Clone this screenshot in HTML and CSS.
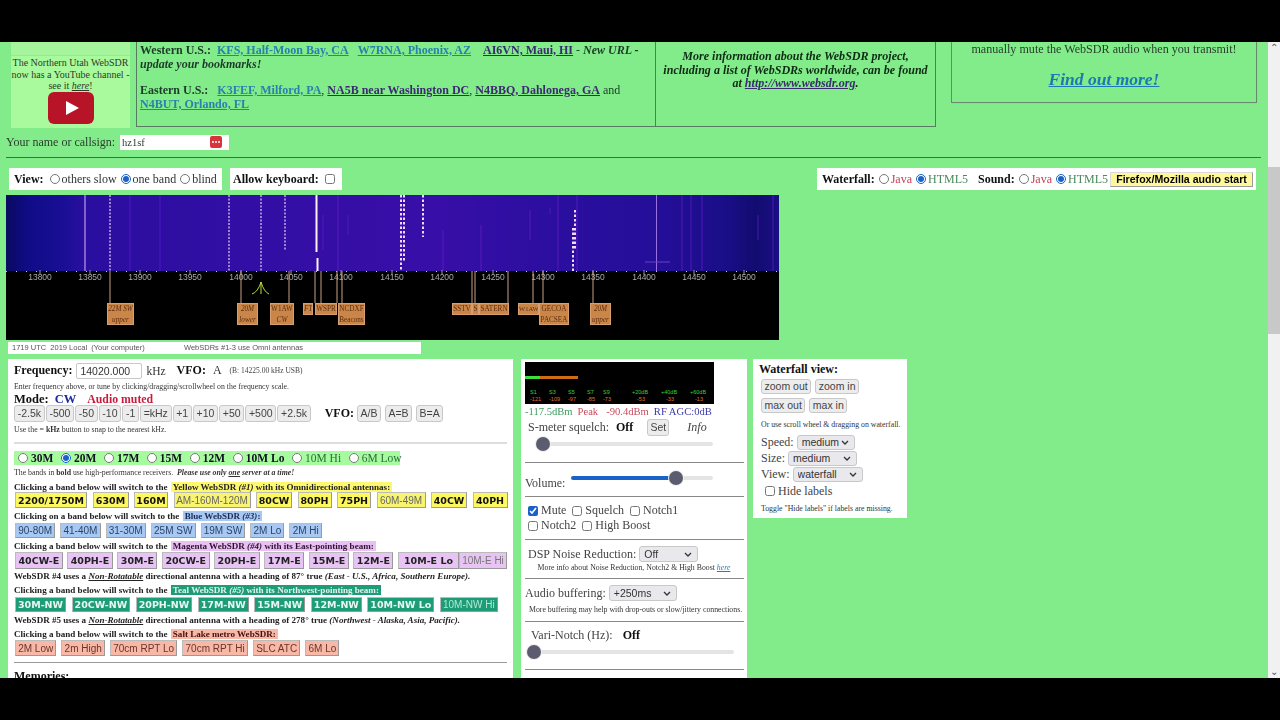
FILE: index.html
```html
<!DOCTYPE html>
<html lang="en">
<head>
<meta charset="utf-8">
<title>WebSDR</title>
<link rel="stylesheet" href="styles.css">
</head>
<body>
<div class="letterbox"></div>
<div class="viewport">
  <main class="page">
    <section class="top">
      <aside class="yt">
        <div class="yt-gap"></div>
        <p>The Northern Utah WebSDR now has a YouTube channel - see it <a href="#"><i>here</i></a>!</p>
        <svg class="yt-logo" width="46" height="32" viewBox="0 0 46 32"><rect width="46" height="32" rx="6" fill="#b81428"/><path d="M18 9 L31 16 L18 23 Z" fill="#fff"/></svg>
      </aside>
      <div class="links">
        <p><b>Western U.S.:</b>&nbsp; <a class="lnk" href="#">KFS, Half-Moon Bay, CA</a> &nbsp; <a class="lnk" href="#">W7RNA, Phoenix, AZ</a> &nbsp;&nbsp; <a class="vis" href="#">AI6VN, Maui, HI</a> - <b><i>New URL - update your bookmarks!</i></b></p>
        <p class="east"><b>Eastern U.S.:</b>&nbsp;&nbsp; <a class="lnk" href="#">K3FEF, Milford, PA</a>, <a class="vis" href="#">NA5B near Washington DC</a>, <a class="vis" href="#">N4BBQ, Dahlonega, GA</a> and <a class="lnk" href="#">N4BUT, Orlando, FL</a></p>
      </div>
      <div class="info"><b><i>More information about the WebSDR project, including a list of WebSDRs worldwide, can be found at <a class="vis" href="#">http://www.websdr.org</a>.</i></b></div>
      <div class="findout">
        <p>manually mute the WebSDR audio when you transmit!</p>
        <a class="find" href="#"><b><i>Find out more!</i></b></a>
      </div>
    </section>

    <div class="callsign"><span>Your name or callsign:</span><span class="callbox"><span>hz1sf</span><svg width="12" height="12" viewBox="0 0 12 12"><rect width="12" height="12" rx="2" fill="#d8343c"/><circle cx="3" cy="6" r="1" fill="#fff"/><circle cx="6" cy="6" r="1" fill="#fff"/><circle cx="9" cy="6" r="1" fill="#fff"/></svg></span></div>
    <hr class="rule">

    <div class="toolbar">
      <div class="chip view"><b>View:</b><label><input type="radio" name="v"> others slow</label><label><input type="radio" name="v" checked> one band</label><label><input type="radio" name="v"> blind</label></div>
      <div class="chip keyb"><b>Allow keyboard:</b><input type="checkbox"></div>
      <div class="chip engines"><b>Waterfall:</b><label><input type="radio" name="w"> <span class="red">Java</span></label><label><input type="radio" name="w" checked> <span class="grn">HTML5</span></label><b class="sound">Sound:</b><label><input type="radio" name="s"> <span class="red">Java</span></label><label><input type="radio" name="s" checked> <span class="grn">HTML5</span></label><button class="ffx">Firefox/Mozilla audio start</button></div>
    </div>

    <div class="waterfall">
      <svg width="773" height="145" viewBox="6 195 773 145">
        <defs>
          <linearGradient id="wf" x1="0" x2="1" y1="0" y2="0">
            <stop offset="0" stop-color="#0a0a60"/>
            <stop offset=".03" stop-color="#100c88"/>
            <stop offset=".07" stop-color="#180e94"/>
            <stop offset=".1" stop-color="#2a0ea0"/>
            <stop offset=".3" stop-color="#320ea4"/>
            <stop offset=".55" stop-color="#380ea8"/>
            <stop offset=".7" stop-color="#2c0ea0"/>
            <stop offset=".85" stop-color="#240e98"/>
            <stop offset=".93" stop-color="#1a0e88"/>
            <stop offset=".97" stop-color="#120c70"/>
            <stop offset="1" stop-color="#1a0e84"/>
          </linearGradient>
        </defs>
        <rect x="6" y="195" width="773" height="145" fill="#000"/>
        <rect x="6" y="195" width="773" height="76" fill="url(#wf)"/>
        <g class="sig-soft">
          <path d="M338 195V271M558 195V271M577 195V271M682 195V271M773 195V271M481 225V271M530 210V240M443 230V271"/>
        </g>
        <g class="sig-faint">
          <path d="M130 195V271M160 195V271M348 215V235M323 215V250M550 208V214M758 215V240M691 195V271M702 195V271"/>
        </g>
        <g class="sig-pale">
          <path d="M85 195V271"/>
        </g>
        <g class="sig-dot">
          <path d="M110 195V271M229 195V271M261 195V271M285 195V250"/>
        </g>
        <g class="sig-block">
          <path d="M401 195V271M404 195V262M423 195V237M573 228V271M575 210V250"/>
        </g>
        <path class="sig-hot" d="M316.500 195V252M317.500 258V271"/>
        <path class="sig-thin" d="M656.500 195V271"/>
        <path class="sig-cross" d="M645 262H670"/>
        <path class="ticks" d="M6 271.500H779"/>
        <g class="majors"><path d="M40 270V275M90 270V275M140 270V275M190 270V275M241 270V275M291 270V275M341 270V275M392 270V275M442 270V275M493 270V275M543 270V275M593 270V275M644 270V275M694 270V275M744 270V275"/></g>
        <g class="scale">
          <text x="40" y="280">13800</text><text x="90" y="280">13850</text><text x="140" y="280">13900</text><text x="190" y="280">13950</text><text x="241" y="280">14000</text><text x="291" y="280">14050</text><text x="341" y="280">14100</text><text x="392" y="280">14150</text><text x="442" y="280">14200</text><text x="493" y="280">14250</text><text x="543" y="280">14300</text><text x="593" y="280">14350</text><text x="644" y="280">14400</text><text x="694" y="280">14450</text><text x="744" y="280">14500</text>
        </g>
        <path class="stems" d="M110 271V303M241 271V303M289 271V303M315 271V303M321 271V303M337 271V303M342 271V303M472 271V303M475 271V303M508 271V303M533 271V303M543 271V303M593 271V303"/>
        <path class="passband" d="M252 294Q258 292 261 282Q264 292 269 294M261 282V294"/>
      </svg>
      <span class="tag two it pos-a">22M SW<br>upper</span>
      <span class="tag two it pos-b">20M<br>lower</span>
      <span class="tag two pos-c">W1AW<br><i>CW</i></span>
      <span class="tag it pos-d">FT</span>
      <span class="tag pos-e">WSPR</span>
      <span class="tag two pos-f">NCDXF<br>Beacons</span>
      <span class="tag pos-g">SSTV</span>
      <span class="tag pos-h">S</span>
      <span class="tag pos-i">SATERN</span>
      <span class="tag pos-j">W1AW</span>
      <span class="tag two pos-k">GECOA<br>PACSEA</span>
      <span class="tag two it pos-l">20M<br>upper</span>
    </div>

    <div class="status"><span class="status-time">1719 UTC&nbsp; 2019 Local&nbsp; (Your computer)</span><span>WebSDRs #1-3 use Omni antennas</span></div>

    <div class="panels">
      <section class="panel main">
        <div class="freq"><b>Frequency:</b><input class="freq-in" value="14020.000"><span>kHz</span><b class="vfo">VFO:</b><span class="vfo-a">A</span><small>(B: 14225.00 kHz USB)</small></div>
        <p class="tiny t1">Enter frequency above, or tune by clicking/dragging/scrollwheel on the frequency scale.</p>
        <div class="mode"><b>Mode:</b><b class="cw">CW</b><b class="muted">Audio muted</b></div>
        <div class="steps">
          <button>-2.5k</button><button>-500</button><button>-50</button><button>-10</button><button>-1</button><button>=kHz</button><button>+1</button><button>+10</button><button>+50</button><button>+500</button><button>+2.5k</button>
          <b class="vfo2">VFO:</b><button class="sp">A/B</button><button class="sp">A=B</button><button class="sp">B=A</button>
        </div>
        <p class="tiny t2">Use the = <b>kHz</b> button to snap to the nearest kHz.</p>
        <hr class="soft">
        <div class="bands">
          <label><input type="radio" name="b"> <b>30M</b></label><label><input type="radio" name="b" checked> <b>20M</b></label><label><input type="radio" name="b"> <b>17M</b></label><label><input type="radio" name="b"> <b>15M</b></label><label><input type="radio" name="b"> <b>12M</b></label><label><input type="radio" name="b"> <b>10M Lo</b></label><label><input type="radio" name="b"> 10M Hi</label><label><input type="radio" name="b"> 6M Low</label>
        </div>
        <p class="tiny t3">The bands in <b>bold</b> use high-performance receivers. &nbsp;<b><i>Please use only <u>one</u> server at a time!</i></b></p>

        <p class="head h-yellow">Clicking a band below will switch to the <mark class="m-yellow">Yellow WebSDR <i>(#1)</i> with its Omnidirectional antennas:</mark></p>
        <div class="btns b-yellow"><button class="bd w1">2200/1750M</button><button class="bd w2">630M</button><button class="bd w3">160M</button><button class="w4">AM-160M-120M</button><button class="bd w5">80CW</button><button class="bd w6">80PH</button><button class="bd w6">75PH</button><button class="w7">60M-49M</button><button class="bd w5">40CW</button><button class="bd w8">40PH</button></div>

        <p class="head">Clicking on a band below will switch to the <mark class="m-blue">Blue WebSDR <i>(#3)</i>:</mark></p>
        <div class="btns b-blue"><button>90-80M</button><button>41-40M</button><button>31-30M</button><button>25M SW</button><button>19M SW</button><button>2M Lo</button><button>2M Hi</button></div>

        <p class="head">Clicking a band below will switch to the <mark class="m-mag">Magenta WebSDR <i>(#4)</i> with its East-pointing beam:</mark></p>
        <div class="btns b-mag"><button class="bd">40CW-E</button><button class="bd">40PH-E</button><button class="bd">30M-E</button><button class="bd">20CW-E</button><button class="bd">20PH-E</button><button class="bd">17M-E</button><button class="bd">15M-E</button><button class="bd">12M-E</button><button class="bd wide">10M-E Lo</button><button>10M-E Hi</button></div>
        <p class="note n-mag"><b>WebSDR #4 uses a <u><i>Non-Rotatable</i></u> directional antenna with a heading of 87° true <i>(East - U.S., Africa, Southern Europe).</i></b></p>

        <p class="head">Clicking a band below will switch to the <mark class="m-teal">Teal WebSDR <i>(#5)</i> with its Northwest-pointing beam:</mark></p>
        <div class="btns b-teal"><button class="bd">30M-NW</button><button class="bd">20CW-NW</button><button class="bd">20PH-NW</button><button class="bd">17M-NW</button><button class="bd">15M-NW</button><button class="bd">12M-NW</button><button class="bd">10M-NW Lo</button><button>10M-NW Hi</button></div>
        <p class="note"><b>WebSDR #5 uses a <u><i>Non-Rotatable</i></u> directional antenna with a heading of 278° true <i>(Northwest - Alaska, Asia, Pacific).</i></b></p>

        <p class="head">Clicking a band below will switch to the <mark class="m-salmon">Salt Lake metro WebSDR:</mark></p>
        <div class="btns b-salmon"><button>2M Low</button><button>2m High</button><button>70cm RPT Lo</button><button>70cm RPT Hi</button><button>SLC ATC</button><button>6M Lo</button></div>
        <hr class="dark">
        <p class="memories"><b>Memories:</b></p>
      </section>

      <section class="panel mid">
        <svg class="smeter" width="189" height="42" viewBox="0 0 189 42">
          <rect width="189" height="42" fill="#000"/>
          <rect x="0" y="14" width="15" height="3" fill="#3ce03c"/>
          <rect x="15" y="14" width="38" height="3" fill="#d06c14"/>
          <g class="s-top"><text x="5" y="32">S1</text><text x="24" y="32">S3</text><text x="43" y="32">S5</text><text x="62" y="32">S7</text><text x="78" y="32">S9</text><text x="107" y="32">+20dB</text><text x="136" y="32">+40dB</text><text x="165" y="32">+60dB</text></g>
          <g class="s-low"><text x="5" y="39">-121</text><text x="24" y="39">-109</text><text x="43" y="39">-97</text><text x="62" y="39">-85</text><text x="78" y="39">-73</text><text x="112" y="39">-53</text><text x="141" y="39">-33</text><text x="170" y="39">-13</text></g>
        </svg>
        <div class="levels"><span class="lv-g">-117.5dBm</span><span class="lv-r">Peak</span><span class="lv-r lv-peak">-90.4dBm</span><span class="lv-b">RF AGC:0dB</span></div>
        <div class="squelch"><span>S-meter squelch:</span><b>Off</b><button>Set</button><i>Info</i></div>
        <input class="range r-sq" type="range" min="0" max="100" value="0">
        <hr class="mid-hr hr1">
        <div class="volume"><span>Volume:</span><input class="range r-vol" type="range" min="0" max="100" value="76" style="--fill:76%"></div>
        <hr class="mid-hr">
        <div class="checks first"><label><input type="checkbox" checked> Mute</label><label><input type="checkbox"> Squelch</label><label><input type="checkbox"> Notch1</label></div>
        <div class="checks"><label><input type="checkbox"> Notch2</label><label><input type="checkbox"> High Boost</label></div>
        <hr class="mid-hr hr3">
        <div class="dsp"><span>DSP Noise Reduction:</span><select class="sel sel-off"><option>Off</option></select></div>
        <p class="tiny center">More info about Noise Reduction, Notch2 &amp; High Boost <a class="lnk" href="#"><i>here</i></a></p>
        <hr class="mid-hr hr4">
        <div class="buffer"><span>Audio buffering:</span><select class="sel sel-buf"><option>+250ms</option></select></div>
        <p class="tiny buf-note">More buffering may help with drop-outs or slow/jittery connections.</p>
        <hr class="mid-hr hr5">
        <div class="vari"><span>Vari-Notch (Hz):</span><b>Off</b></div>
        <input class="range r-var" type="range" min="0" max="100" value="0">
        <hr class="mid-hr hr6">
      </section>

      <section class="panel side">
        <h3>Waterfall view:</h3>
        <div class="zoomrow"><button>zoom out</button><button>zoom in</button></div>
        <div class="zoomrow"><button>max out</button><button>max in</button></div>
        <p class="tiny side-n1">Or use scroll wheel &amp; dragging on waterfall.</p>
        <div class="opt"><span>Speed:</span><select class="sel s1"><option>medium</option></select></div>
        <div class="opt"><span>Size:</span><select class="sel s2"><option>medium</option></select></div>
        <div class="opt"><span>View:</span><select class="sel s3"><option>waterfall</option></select></div>
        <label class="hide"><input type="checkbox"> Hide labels</label>
        <p class="tiny side-n2">Toggle "Hide labels" if labels are missing.</p>
      </section>
    </div>
  </main>
  <div class="scrollbar"><span class="arrow">⌃</span><div class="thumb"></div><span class="arrow down">⌄</span></div>
</div>
<div class="letterbox"></div>
</body>
</html>
```
FILE: styles.css
```css
* { box-sizing: border-box; }
html, body { margin: 0; height: 720px; overflow: hidden; background: #000; }
body { font-family: "Liberation Serif", serif; color: #111; font-size: 13px; }
p, h3 { margin: 0; }
a { color: inherit; }
.letterbox { height: 42px; background: #000; }
.viewport { height: 636px; display: flex; overflow: hidden; background: #83ec8a; }
.page { flex: 1; min-width: 0; overflow: hidden; padding-left: 6px; filter: blur(.35px); }
.scrollbar { width: 12px; background: #f1f1f1; display: flex; flex-direction: column; align-items: center; font: 10px/12px "Liberation Sans", sans-serif; color: #555; }
.thumb { margin-top: 113px; width: 12px; height: 167px; background: #c8c8c8; flex: none; }
.arrow { height: 12px; flex: none; }
.arrow.down { margin-top: auto; }

/* top banner row */
.top { display: flex; height: 85px; align-items: flex-start; }
.yt { width: 119px; height: 86px; margin-left: 5px; background: #a8fa9c; text-align: center; font-size: 10px; line-height: 11.500px; color: #2c3a2c; flex: none; }
.yt-gap { height: 14px; margin-bottom: 1px; background: #a4f59c; border-bottom: 1px solid #94ec90; }
.yt-logo { display: block; margin: 0 auto; }
.links { width: 519px; height: 85px; margin-left: 6px; border-left: 1px solid #5a7a60; border-bottom: 1px solid #5a7a60; padding: 1px 3px 0; font-size: 12px; line-height: 14px; flex: none; color: #1d3a2a; font-weight: bold; }
.links p { font-weight: normal; }
.links a { font-weight: bold; }
.links .east { margin-top: 12px; }
.lnk { color: #2a80ac; }
.vis { color: #3a2a70; }
.info { width: 281px; height: 85px; border: 1px solid #5a7a60; border-top: 0; padding: 8px 4px 0; text-align: center; font-size: 12.050px; line-height: 13.500px; flex: none; color: #0d2a14; }
.findout { width: 306px; height: 61px; margin-left: 15px; border: 1px solid #6a8a70; border-top: 0; box-shadow: 1px 1px 0 #a0d0a0; text-align: center; font-size: 12.100px; flex: none; color: #27402c; }
.findout p { line-height: 14px; }
.find { display: block; margin-top: 12px; color: #1c78b4; font-size: 17.500px; line-height: 22px; }

.callsign { height: 30px; display: flex; align-items: center; gap: 4px; font-size: 12px; color: #2c3c30; white-space: nowrap; }
.callbox { width: 109px; height: 15px; background: #fff; display: flex; align-items: center; justify-content: space-between; padding: 0 7px 0 2px; font-size: 10.500px; margin-left: 1px; }
.rule { margin: 0; width: 1255px; height: 1px; border: 0; background: #4a6a50; }

.toolbar { display: flex; height: 37px; padding-top: 10px; font-size: 12px; }
.chip { background: #fff; height: 22px; display: flex; align-items: center; gap: 4px; white-space: nowrap; color: #333; flex: none; }
.chip b { color: #111; }
.view { margin-left: 3px; width: 213px; padding-left: 5px; }
.view b { margin-right: 2px; }
.keyb { margin-left: 8px; width: 112px; padding-left: 3px; gap: 6px; }
.engines { margin-left: auto; margin-right: 12px; width: 439px; padding-left: 5px; }
.chip label { display: inline-flex; align-items: center; gap: 2px; }
.chip input { margin: 0; width: 10px; height: 10px; accent-color: #1a62c8; }
.sound { margin-left: 6px; }
.red { color: #c83c50; }
.grn { color: #4a8a5a; }
.ffx { margin: 0 0 0 -2px; width: 143px; height: 15px; padding: 0; font: bold 10.600px/13px "Liberation Sans", sans-serif; background: #fff89a; border: 1px solid #dadada; border-right-color: #999; border-bottom-color: #999; border-radius: 0; color: #000; }

.waterfall { position: relative; width: 773px; height: 145px; }
.waterfall svg { display: block; }
.sig-soft path { fill: none; stroke: #7a20d8; stroke-width: 1; opacity: .55; }
.sig-faint path { fill: none; stroke: #5a18c8; stroke-width: 2; opacity: .4; }
.sig-pale path { fill: none; stroke: #c8a0f0; stroke-width: 1.500; opacity: .75; }
.sig-dot path { fill: none; stroke: #f0d0f4; stroke-width: 1.200; stroke-dasharray: 2 1.500; }
.sig-block path { fill: none; stroke: #f4d8f8; stroke-width: 2; stroke-dasharray: 2.500 2; }
.sig-hot { fill: none; stroke: #fff0f0; stroke-width: 2; }
.sig-thin { fill: none; stroke: #9a70e0; stroke-width: 1; }
.sig-cross { fill: none; stroke: #6a40c8; stroke-width: 1; }
.ticks { fill: none; stroke: #ccc; stroke-width: 1; stroke-dasharray: 1 9; }
.majors path { fill: none; stroke: #999; }
.scale text { font: 8.500px "Liberation Sans", sans-serif; fill: #aaa; text-anchor: middle; }
.stems { fill: none; stroke: #c8a284; stroke-width: 1; }
.passband { fill: none; stroke: #b4dc3c; stroke-width: 1; }
.tag { position: absolute; top: 108px; height: 12px; background: #ca8648; border: 1px solid #d8a070; color: #5a2c10; font-size: 7.200px; line-height: 10.500px; overflow: hidden; white-space: nowrap; text-align: center; }
.two { height: 22px; }
.it { font-style: italic; }
.pos-a { left: 101px; width: 27px; }
.pos-b { left: 231px; width: 21px; }
.pos-c { left: 264px; width: 24px; }
.pos-d { left: 297px; width: 10px; }
.pos-e { left: 309px; width: 22px; }
.pos-f { left: 332px; width: 27px; }
.pos-g { left: 446px; width: 20px; }
.pos-h { left: 466px; width: 7px; }
.pos-i { left: 473px; width: 30px; }
.pos-j { left: 512px; width: 21px; font-size: 6.500px; }
.pos-k { left: 533px; width: 30px; }
.pos-l { left: 584px; width: 21px; }

.status { margin: 2px 0 0 2px; width: 413px; height: 12px; background: #fff; font: 7.500px/12px "Liberation Sans", sans-serif; color: #555; padding-left: 4px; display: flex; }
.status-time { width: 172px; }

.panels { display: flex; align-items: flex-start; margin-top: 5px; }
.panel { background: #fff; flex: none; }
.main { margin-left: 2px; width: 505px; height: 340px; padding: 0 6px; overflow: hidden; }
.freq { height: 21px; margin-top: 1px; display: flex; align-items: center; font-size: 11.500px; color: #333; }
.freq b { font-size: 12px; color: #111; }
.freq-in { width: 66px; height: 16px; margin: 0 4px; padding: 0 3px; border: 1px solid #c8c8c8; border-radius: 2px; font: 10.500px "Liberation Sans", sans-serif; color: #333; }
.vfo { margin-left: 11px; }
.vfo-a { margin-left: 7px; font-size: 12px; }
.freq small { margin-left: 8px; font-size: 7.500px; color: #444; }
.tiny { font-size: 7.800px; line-height: 10px; color: #333; white-space: nowrap; }
.t1 { margin-top: 1px; }
.mode { height: 14px; display: flex; gap: 6px; font-size: 12.500px; line-height: 14px; }
.cw { color: #1c2a9c; }
.muted { color: #c81c3c; margin-left: 5px; font-size: 11.800px; }
.steps { height: 17px; margin-top: -1px; display: flex; gap: 1px; align-items: stretch; position: relative; }
button { margin: 0; padding: 0 3px; font: 10.500px/13px "Liberation Sans", sans-serif; color: #444; background: #ececec; border: 1px solid #c8c8c8; border-radius: 3px; white-space: nowrap; }
.steps button { flex: none; padding: 0 2.700px; }
.vfo2 { font-size: 12px; margin: 1px 2px 0 13px; line-height: 15px; }
.steps .sp { margin-right: 3px; padding: 0 2.500px; }
.t2 { margin-top: 3px; }
.soft { margin: 7px 0 0; height: 2px; border: 0; background: #ddd; }
.bands { margin-top: 7px; width: 386px; height: 14px; display: flex; background: #a6fb9e; font-size: 11.500px; line-height: 14px; gap: 7.600px; padding-left: 4px; white-space: nowrap; color: #2c6c3a; }
.bands b { color: #112; }
.bands label { display: inline-flex; align-items: center; gap: 3px; }
.bands input { margin: 0; width: 10px; height: 10px; accent-color: #1a62c8; }
.t3 { margin-top: 3px; }
.head { font-size: 9.050px; line-height: 11px; font-weight: bold; white-space: nowrap; color: #222; margin-top: 3px; }
.h-yellow { margin-top: 4px; }
mark { color: inherit; padding: 0 2px; margin-left: 1px; }
.m-yellow { background: #fdf870; }
.m-blue { background: #a8c8f4; color: #1a2a50; }
.m-mag { background: #e8c0f4; color: #301030; }
.m-teal { background: #1e9c78; color: #e0f4ec; }
.m-salmon { background: #f8b8a8; color: #401010; }
.btns { display: flex; gap: 5px; margin: 0 0 0 1px; height: 16px; }
.btns button { border: 1px solid #bbb; border-right-color: #999; border-bottom-color: #999; border-radius: 0; padding: 0 2.200px; font-size: 10px; flex: none; }
.btns .bd { font: bold 9.500px/13px "DejaVu Sans", sans-serif; color: #222; padding: 0 2.500px; }
.b-yellow { margin-top: -1px; gap: 5.500px; }
.b-yellow button { background: #fdf860; padding: 0; }
.b-yellow .bd { color: #111; padding: 0; }
.b-yellow button:not(.bd) { color: #666; background: #f8f470; }
.w1 { width: 72px; } .w2 { width: 36px; } .w3 { width: 34px; } .w4 { width: 77px; } .w5 { width: 36px; } .w6 { width: 34px; } .w7 { width: 49px; } .w8 { width: 35px; }
.b-blue { margin-top: 1px; height: 15px; }
.b-blue button { background: #a8c8f4; color: #2a4468; }
.b-mag { height: 17px; gap: 4.500px; }
.b-mag button { background: #e8c4f4; }
.b-mag .wide { padding: 0 5px; }
.b-mag button:last-child { color: #777; margin-left: -4.500px; }
.note { font-size: 9.050px; line-height: 11px; white-space: nowrap; color: #222; margin-top: 3px; }
.n-mag { margin-top: 2px; }
.note i { font-weight: bold; }
.b-teal { margin-top: 1px; height: 15px; gap: 5.500px; }
.b-teal button { background: #1e9c78; color: #e8f8f0; }
.b-teal .bd { color: #e8f8f0; padding: 0 2px; }
.b-teal button:last-child { color: #b0e8d0; }
.b-salmon { gap: 5px; }
.b-salmon button { background: #f8b8a8; color: #6a3428; }
.dark { margin: 6px 0 0; height: 1px; border: 0; background: #999; }
.memories { font-size: 12px; line-height: 14px; margin-top: 6px; }

.mid { margin-left: 8px; width: 226px; height: 340px; padding: 3px 4px 0; font-size: 12px; color: #444; overflow: hidden; }
.smeter { display: block; }
.s-top text { font: 5.500px "Liberation Sans", sans-serif; fill: #3cd03c; }
.s-low text { font: 5.500px "Liberation Sans", sans-serif; fill: #e07020; }
.levels { display: flex; gap: 5px; font-size: 10.600px; line-height: 14px; margin-top: 1px; white-space: nowrap; }
.lv-g { color: #3c9a5c; } .lv-r { color: #c84c5c; } .lv-b { color: #3a3aa8; }
.lv-peak { margin-left: 3px; }
.squelch { height: 17px; margin: 0 0 0 3px; display: flex; align-items: center; gap: 7px; }
.squelch b { color: #111; }
.squelch button { margin-left: 7px; width: 22px; height: 17px; padding: 0; }
.squelch i { margin-left: 11px; }
.range { -webkit-appearance: none; appearance: none; display: block; height: 14px; margin: 0; background: transparent; --fill: 0%; }
.range::-webkit-slider-runnable-track { height: 4px; border-radius: 2px; background: linear-gradient(to right, #1a62c8 var(--fill), #e4e4e4 var(--fill)); }
.range::-webkit-slider-thumb { -webkit-appearance: none; width: 14px; height: 14px; margin-top: -5px; border-radius: 50%; background: #5c5c70; border: 0; box-shadow: 0 0 0 1px #eee; }
.r-sq { width: 177px; margin: 1px 0 0 11px; }
.mid-hr { border: 0; height: 1px; background: #888; margin: 0; width: 219px; }
.hr1 { margin-top: 11px; }
.volume { height: 33px; display: flex; align-items: flex-end; gap: 5px; }
.volume span { line-height: 14px; margin-bottom: 6px; }
.r-vol { width: 142px; margin: 0 0 11px 1px; }
.checks { height: 15px; display: flex; gap: 6px; margin-left: 3px; }
.checks.first { margin-top: 6px; }
.checks label, .hide { display: inline-flex; align-items: center; gap: 3px; }
.checks input, .hide input { margin: 0; width: 10px; height: 10px; accent-color: #1a62c8; }
.hr3 { margin-top: 6px; }
.dsp { height: 24px; margin: 2px 0 0 3px; display: flex; align-items: center; gap: 3px; }
.sel { -webkit-appearance: none; appearance: none; height: 16px; font: 10.500px "Liberation Sans", sans-serif; color: #333; border: 1px solid #c8c8c8; border-radius: 3px; padding: 0 12px 0 4px; background: #e9e9ed url("data:image/svg+xml,%3Csvg xmlns='http://www.w3.org/2000/svg' width='8' height='5'%3E%3Cpath d='M1 1l3 3 3-3' fill='none' stroke='%23333' stroke-width='1.300'/%3E%3C/svg%3E") no-repeat right 5px center; }
.sel-off { width: 59px; }
.sel-buf { width: 68px; }
.center { text-align: center; line-height: 9px; margin-top: -3px; }
.hr4 { margin-top: 6px; }
.buffer { height: 24px; margin-top: 2px; display: flex; align-items: center; gap: 3px; }
.buf-note { padding-left: 4px; }
.hr5 { margin-top: 6px; }
.vari { height: 17px; margin: 5px 0 0 6px; display: flex; align-items: center; gap: 10px; }
.vari b { color: #111; }
.r-var { width: 207px; margin: 1px 0 0 2px; }
.hr6 { margin-top: 10px; }

.side { margin-left: 6px; width: 154px; height: 159px; padding: 3px 0 0 8px; font-size: 12px; color: #444; }
.side h3 { font-size: 12px; line-height: 14px; color: #111; margin-left: -2px; }
.zoomrow { display: flex; gap: 4px; height: 15px; margin-top: 3px; }
.zoomrow + .zoomrow { margin-top: 4px; }
.zoomrow button { padding: 0 2.500px; border-radius: 3px; }
.side-n1 { margin-top: 7px; }
.opt { height: 16px; display: flex; align-items: center; gap: 3px; }
.side-n1 + .opt { margin-top: 4px; }
.s1 { width: 58px; height: 15px; } .s2 { width: 69px; height: 15px; } .s3 { width: 70px; height: 15px; }
.hide { margin: 2px 0 0 4px; height: 14px; }
.side-n2 { margin-top: 4px; }
```
